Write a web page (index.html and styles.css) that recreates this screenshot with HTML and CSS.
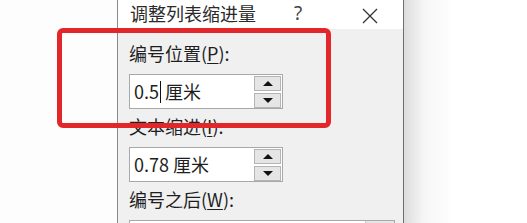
FILE: index.html
```html
<!DOCTYPE html>
<html lang="zh-CN">
<head>
  <meta charset="UTF-8">
  <title>调整列表缩进量</title>
  <link rel="stylesheet" href="styles.css">
</head>
<body>

<div class="screen">
  <div class="backdrop"></div>

  <div class="dialog">
    <div class="title-bar">
      <span class="title">调整列表缩进量</span>
      <span class="help">?</span>
      <span class="close">
        <svg width="16" height="16" viewBox="0 0 16 16">
          <path d="M1 1 L15 15 M15 1 L1 15" stroke="#333" stroke-width="1.3" fill="none"/>
        </svg>
      </span>
    </div>

    <div class="dialog-body">
      <div class="label">编号位置(<u>P</u>):</div>
      <div class="spin-field">
        <div class="value">0.5<span class="caret"></span>厘米</div>
        <div class="spin-buttons">
          <div class="spin up"><span class="tri-up"></span></div>
          <div class="spin down"><span class="tri-down"></span></div>
        </div>
      </div>

      <div class="label">文本缩进(<u>I</u>):</div>
      <div class="spin-field">
        <div class="value">0.78 厘米</div>
        <div class="spin-buttons">
          <div class="spin up"><span class="tri-up"></span></div>
          <div class="spin down"><span class="tri-down"></span></div>
        </div>
      </div>

      <div class="label">编号之后(<u>W</u>):</div>
      <div class="combo">
        <div class="combo-text"></div>
        <div class="combo-button"></div>
      </div>
    </div>
  </div>

  <div class="shadow"></div>

  <!-- highlight drawn over the screenshot -->
  <div class="highlight"></div>
</div>

</body>
</html>
```

FILE: styles.css
```css
body {
  margin: 0;
  background: #fff;
  font-family: "Noto Sans CJK SC", "Noto Sans", sans-serif;
  color: #1e1e1e;
}

.screen {
  position: relative;
  display: flex;
  width: 527px;
  height: 223px;
  overflow: hidden;
}

.backdrop {
  width: 117px;
  flex: 0 0 117px;
  background: #fdfdfd;
}

.dialog {
  flex: 0 0 285px;
  border-left: 1px solid #8a8a8a;
  border-right: 1px solid #6e6e6e;
  background: #f0f0f0;
  display: flex;
  flex-direction: column;
}

.title-bar {
  height: 34px;
  background: #fff;
  display: flex;
  align-items: flex-start;
  padding: 0 0 0 12px;
  font-size: 18px;
  line-height: 26px;
  color: #2a2a2a;
}

.title {
  width: 164px;
}

.help {
  width: 68px;
  font-family: "Noto Sans", sans-serif;
  font-size: 19px;
  color: #444;
}

.close {
  padding-top: 3px;
}

.dialog-body {
  padding: 12px 0 0 11px;
}

.label {
  font-size: 18px;
  line-height: 24px;
  height: 24px;
  margin-bottom: 9px;
}

.label u {
  text-underline-offset: 2px;
}

.spin-field {
  width: 152px;
  height: 33px;
  border: 1px solid #a8a8a8;
  background: #fff;
  display: flex;
  justify-content: space-between;
  margin-bottom: 5px;
}

.value {
  font-size: 18px;
  line-height: 33px;
  padding-left: 4px;
  display: flex;
  align-items: center;
}

.caret {
  display: inline-block;
  width: 0;
  height: 22px;
  border-left: 1px solid #111;
  margin: 0 4px 0 1px;
}

.spin-buttons {
  display: flex;
  flex-direction: column;
  gap: 2px;
  padding: 1px 1px 0 0;
}

.spin {
  width: 25px;
  height: 14px;
  background: #e5e5e5;
  border: 1px solid #b4b4b4;
  display: flex;
  align-items: center;
  justify-content: center;
}

.tri-up {
  border-left: 5px solid transparent;
  border-right: 5px solid transparent;
  border-bottom: 5px solid #111;
}

.tri-down {
  border-left: 5px solid transparent;
  border-right: 5px solid transparent;
  border-top: 5px solid #111;
}

.combo {
  width: 264px;
  height: 33px;
  border: 1px solid #a8a8a8;
  background: #fff;
  display: flex;
  justify-content: flex-end;
}

.combo-button {
  width: 28px;
  background: #e5e5e5;
  border-left: 1px solid #c8c8c8;
}

.shadow {
  flex: 1;
  background: linear-gradient(to right, #dcdcdc, #f6f6f6 20px, #fff 50px);
}

.highlight {
  position: absolute;
  left: 57px;
  top: 28px;
  width: 264px;
  height: 90px;
  border: 5px solid #e3262a;
  border-radius: 6px;
}
```
